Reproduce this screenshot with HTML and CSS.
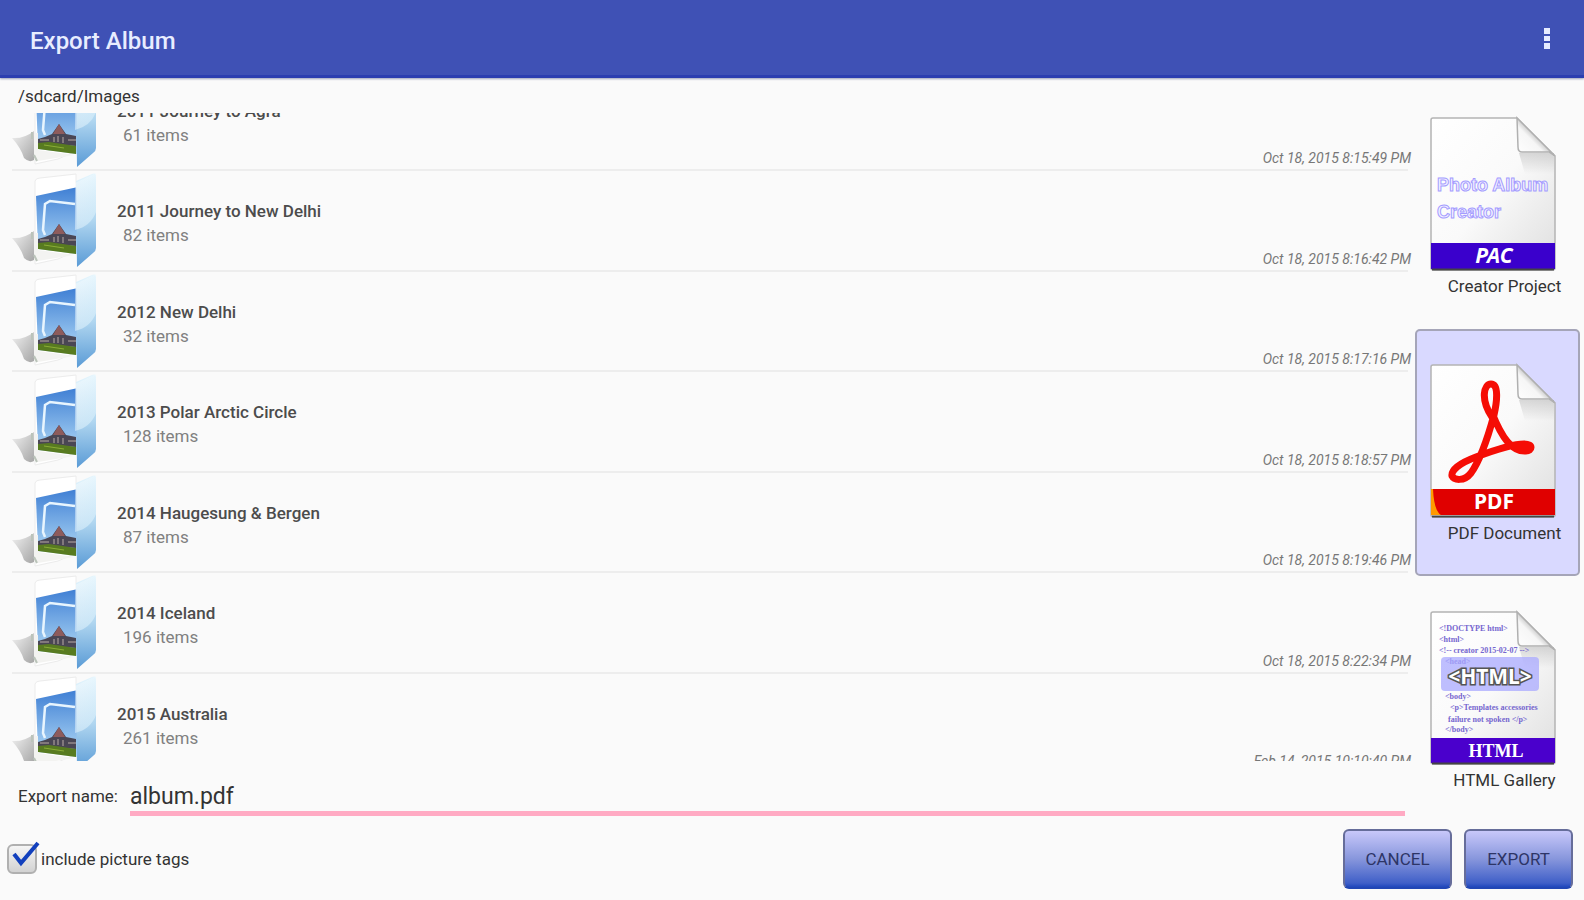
FILE: index.html
```html
<!DOCTYPE html>
<html lang="en">
<head>
<meta charset="utf-8">
<title>Export Album</title>
<link rel="stylesheet" href="styles.css">
</head>
<body>
<svg class="defs" width="0" height="0" aria-hidden="true">
  <defs>
    <linearGradient id="sky" x1="0" y1="0" x2="0" y2="1"><stop offset="0" stop-color="#3f7fd4"/><stop offset="1" stop-color="#b4dcf7"/></linearGradient>
    <linearGradient id="flap" x1="0" y1="0" x2="0" y2="1"><stop offset="0" stop-color="#e4f5fd"/><stop offset=".5" stop-color="#b0d6f0"/><stop offset="1" stop-color="#5a9bd6"/></linearGradient>
    <linearGradient id="gloss" x1="0" y1="0" x2="1" y2="1"><stop offset="0" stop-color="#fff" stop-opacity=".4"/><stop offset="1" stop-color="#d8f0fc" stop-opacity=".6"/></linearGradient>
    <linearGradient id="shade" x1="0" y1="0" x2="1" y2="1"><stop offset="0" stop-color="#f2f2f2"/><stop offset="1" stop-color="#a6a6a6"/></linearGradient>
    <linearGradient id="paper" x1="0" y1="0" x2="1" y2="1"><stop offset="0" stop-color="#fff"/><stop offset=".5" stop-color="#fafafa"/><stop offset="1" stop-color="#dedede"/></linearGradient>
    <linearGradient id="curl" x1="0" y1="1" x2="1" y2="0"><stop offset="0" stop-color="#fff"/><stop offset=".4" stop-color="#f6f6f6"/><stop offset=".5" stop-color="#d0d0d0"/></linearGradient>
    <linearGradient id="dusk" x1="0" y1="0" x2="0" y2="1"><stop offset="0" stop-color="#000" stop-opacity=".14"/><stop offset="1" stop-color="#000" stop-opacity="0"/></linearGradient>
  </defs>
  <symbol id="folder" viewBox="0 0 86 96">
    <path d="M0 65Q12 66 22 58V87Q17 90 12 85Q9 75 0 65Z" fill="url(#shade)"/>
    <path d="M23 8Q24 5 28 5L64 1V78L46 86L23 91Z" fill="#fff" stroke="#ececec"/>
    <path d="M24 23L66 14V81L26 76Z" fill="url(#sky)"/>
    <path d="M26 66L33 64L40 61L47 51L54 61L64 63V73L26 70Z" fill="#4a4654"/>
    <path d="M41 61L47 51L53 61Z" fill="#8d5b5c"/>
    <path d="M28 67H37M42 64V69M46 63V69M51 64V70M56 67H64" stroke="#b9aaa5" stroke-width="1"/>
    <path d="M26 70L37 69L64 73V81L26 76Z" fill="#587b20"/>
    <path d="M32 72L52 75" stroke="#8bad37" stroke-width="1"/>
    <path d="M33 62L31 57L33 31L38 28L63 31" fill="none" stroke="#e8f5fe" stroke-width="2.5"/>
    <path d="M64 8L80 1Q84 -1 84 4V75Q84 78 81 80L65 94Z" fill="url(#flap)"/>
    <path d="M63 10L84 0V39Q79 53 63 57Z" fill="url(#gloss)"/>
    <path d="M22 60V86L26 88L62 82L26 77V60Z" fill="#f3f3f1"/>
    <path d="M20 59V66M22 82L25 88" stroke="#bbc4ba" stroke-width="2"/>
  </symbol>
  <symbol id="page" viewBox="0 0 128 156">
    <path d="M4 2H88L126 40V152Q126 154 123 154H5Q2 154 2 152V4Q2 2 4 2Z" fill="url(#paper)" stroke="#b4b4b4" stroke-width="1.5"/>
    <path d="M90 37H125V58H96Z" fill="url(#dusk)"/>
    <path d="M88 2L126 40L120 36H93Q89 36 89 31Z" fill="url(#curl)" stroke="#b0b0b0" stroke-width="1.5"/>
  </symbol>
</svg>

<header class="bar">
  <h1 class="bar-title">Export Album</h1>
  <button class="more" type="button" aria-label="More options">
    <svg width="8" height="24" viewBox="0 0 8 24"><path d="M1 1h6v6H1zM1 9h6v5H1zM1 16h6v6H1z" fill="#e6ebff"/></svg>
  </button>
</header>

<form class="export">
  <main class="content">
    <section class="browser">
      <p class="path">/sdcard/Images</p>
      <div class="viewport">
        <ul class="albums">
          <li class="album"><svg class="folder"><use href="#folder"/></svg><div class="info"><span class="name">2011 Journey to Agra</span><span class="count">61 items</span></div><time class="date">Oct 18, 2015 8:15:49 PM</time></li>
          <li class="album"><svg class="folder"><use href="#folder"/></svg><div class="info"><span class="name">2011 Journey to New Delhi</span><span class="count">82 items</span></div><time class="date">Oct 18, 2015 8:16:42 PM</time></li>
          <li class="album"><svg class="folder"><use href="#folder"/></svg><div class="info"><span class="name">2012 New Delhi</span><span class="count">32 items</span></div><time class="date">Oct 18, 2015 8:17:16 PM</time></li>
          <li class="album"><svg class="folder"><use href="#folder"/></svg><div class="info"><span class="name">2013 Polar Arctic Circle</span><span class="count">128 items</span></div><time class="date">Oct 18, 2015 8:18:57 PM</time></li>
          <li class="album"><svg class="folder"><use href="#folder"/></svg><div class="info"><span class="name">2014 Haugesung &amp; Bergen</span><span class="count">87 items</span></div><time class="date">Oct 18, 2015 8:19:46 PM</time></li>
          <li class="album"><svg class="folder"><use href="#folder"/></svg><div class="info"><span class="name">2014 Iceland</span><span class="count">196 items</span></div><time class="date">Oct 18, 2015 8:22:34 PM</time></li>
          <li class="album"><svg class="folder"><use href="#folder"/></svg><div class="info"><span class="name">2015 Australia</span><span class="count">261 items</span></div><time class="date">Feb 14, 2015 10:10:40 PM</time></li>
        </ul>
      </div>
      <div class="field">
        <label class="field-label" for="export-name">Export name:</label>
        <input class="field-input" id="export-name" type="text" value="album.pdf">
      </div>
    </section>

    <section class="formats" aria-label="Export format">
      <label class="format">
        <input class="format-radio" type="radio" name="format">
        <svg class="file" viewBox="0 0 128 156">
          <use href="#page"/>
          <g class="art-album"><text x="8" y="75">Photo Album</text><text x="8" y="102">Creator</text></g>
          <rect x="2" y="127" width="124" height="26" fill="#3a00cc"/>
          <path d="M3 153.500H125" stroke="#444" stroke-width="2"/>
          <text class="band band-pac" x="65" y="147">PAC</text>
        </svg>
        <span class="format-name">Creator Project</span>
      </label>
      <label class="format">
        <input class="format-radio" type="radio" name="format" checked>
        <svg class="file" viewBox="0 0 128 156">
          <use href="#page"/>
          <path d="M63 54C51 36 55 21 62 21C70 21 68 39 65 52C59 74 52 96 42 110C35 119 25 117 23 113C22 107 31 100 47 94C63 88 85 81 95 81C105 81 103 88 97 88C83 89 73 75 63 50" fill="none" stroke="#f50d05" stroke-width="7" stroke-linejoin="round" stroke-linecap="round"/>
          <rect x="2" y="126" width="124" height="26" fill="#e00000"/>
          <path d="M2 126V152H12Q5 148 4 126Z" fill="#ff9a00"/>
          <path d="M3 153.500H125" stroke="#444" stroke-width="2"/>
          <text class="band" x="65" y="146">PDF</text>
        </svg>
        <span class="format-name">PDF Document</span>
      </label>
      <label class="format">
        <input class="format-radio" type="radio" name="format">
        <svg class="file" viewBox="0 0 128 156">
          <use href="#page"/>
          <g class="art-code">
            <text x="10" y="21">&lt;!DOCTYPE html&gt;</text>
            <text x="10" y="32">&lt;html&gt;</text>
            <text x="10" y="43">&lt;!-- creator 2015-02-07 --&gt;</text>
            <text x="16" y="54">&lt;head&gt;</text>
            <text x="16" y="89">&lt;body&gt;</text>
            <text x="21" y="100">&lt;p&gt;Templates accessories</text>
            <text x="19" y="112">failure not spoken &lt;/p&gt;</text>
            <text x="16" y="122">&lt;/body&gt;</text>
          </g>
          <rect x="12" y="47" width="98" height="34" rx="4" fill="#aaaaff" fill-opacity=".75"/>
          <text class="art-html" x="61" y="74">&lt;HTML&gt;</text>
          <rect x="2" y="128" width="124" height="25" fill="#4a00cc"/>
          <path d="M3 153.500H125" stroke="#444" stroke-width="2"/>
          <text class="band band-html" x="67" y="147">HTML</text>
        </svg>
        <span class="format-name">HTML Gallery</span>
      </label>
    </section>
  </main>

  <footer class="actions">
    <label class="tags">
      <span class="tick">
        <input class="tick-box" type="checkbox" checked>
        <svg class="tick-mark" width="30" height="28" viewBox="0 0 30 28"><path d="M3 14L10 23L27 3" fill="none" stroke="#1240bd" stroke-width="4"/></svg>
      </span>
      include picture tags
    </label>
    <div class="buttons">
      <button class="btn" type="button">CANCEL</button>
      <button class="btn" type="button">EXPORT</button>
    </div>
  </footer>
</form>
</body>
</html>
```
FILE: styles.css
```css
* { box-sizing: border-box; }

body {
  margin: 0;
  height: 100vh;
  display: flex;
  flex-direction: column;
  background: #fafafa;
  color: #333;
  font: 17px/24px Roboto, "Liberation Sans", sans-serif;
}

.defs { position: absolute; }

.bar {
  flex: none;
  display: flex;
  align-items: center;
  justify-content: space-between;
  height: 78px;
  padding: 2px 32px 0 30px;
  background: #3f51b5;
  border-bottom: 3px solid #2c3eb0;
  box-shadow: 0 1px 2px #9a9fb8;
  color: #e8edff;
}
.bar-title { margin: 0; padding-top: 4px; font-size: 24px; font-weight: 500; line-height: 32px; }
.more { display: flex; padding: 4px 1px; border: 0; background: none; }

.export { flex: 1; min-height: 0; display: flex; flex-direction: column; }
.content { flex: 1; min-height: 0; display: flex; }
.browser { flex: 1; min-width: 0; display: flex; flex-direction: column; padding-bottom: 8px; }
.path { margin: 0; padding: 6px 18px 5px; }

.viewport { flex: 1; min-height: 0; overflow: hidden; padding-left: 12px; }
.albums {
  display: grid;
  grid-auto-rows: 1fr;
  height: calc(100% + 55px);
  margin: -42px 0 0;
  padding: 0;
  list-style: none;
}
.album {
  display: flex;
  margin-right: 7px;
  padding-top: 2px;
  border-bottom: 2px solid #ededed;
}
.folder { flex: none; width: 86px; height: 96px; }
.info { flex: 1; display: flex; flex-direction: column; padding: 26px 0 0 19px; }
.name { color: #4c4c4c; font-weight: 500; }
.count { padding-left: 6px; color: #808080; }
.date { align-self: flex-end; margin-right: -3px; color: #777; font-size: 14px; font-style: italic; line-height: 22px; }

.field { flex: none; display: flex; align-items: flex-end; gap: 12px; padding: 10px 10px 0 18px; }
.field-label { padding-bottom: 8px; }
.field-input {
  flex: 1;
  min-width: 0;
  height: 45px;
  padding: 10px 0 0;
  border: 0;
  border-bottom: 5px solid #ffaac3;
  outline: 0;
  background: none;
  color: #333;
  font: 23px/28px Roboto, "Liberation Sans", sans-serif;
}

.formats { flex: none; width: 169px; padding: 4px 4px 0 0; display: flex; flex-direction: column; }
.format {
  display: flex;
  flex-direction: column;
  height: 247px;
  padding: 32px 0 0 12px;
  border: 2px solid transparent;
  border-radius: 5px;
}
.format:has(:checked) { border-color: #a5a5b8; background: #d9d9ff; }
.format-radio { position: absolute; opacity: 0; pointer-events: none; }
.file { width: 128px; height: 156px; }
.format-name { padding: 2px 0 0 2px; text-align: center; }

.band { fill: #fff; font: bold 21px "Noto Sans", sans-serif; text-anchor: middle; }
.band-pac { font-style: italic; }
.band-html { font-family: "Liberation Serif", serif; font-size: 18px; }
.art-album { fill: #f4f2ff; stroke: #a49cff; stroke-width: 1px; font: bold 18px "Liberation Sans", sans-serif; }
.art-code { fill: #7566cf; font: bold 8px "Liberation Serif", serif; }
.art-html { fill: #fff; stroke: #555; stroke-width: 3px; paint-order: stroke; font: bold 21px "Noto Sans", sans-serif; text-anchor: middle; }

.actions {
  flex: none;
  display: flex;
  align-items: center;
  justify-content: space-between;
  height: 76px;
  padding: 0 11px 6px 7px;
}
.tags { display: flex; align-items: center; gap: 4px; }
.tick { position: relative; display: flex; }
.tick-box {
  appearance: none;
  width: 30px;
  height: 30px;
  margin: 0;
  border: 2px solid #b0b0b0;
  border-radius: 6px;
  background: linear-gradient(#f5f5f5, #d2d2d2);
}
.tick-mark { position: absolute; left: 4px; top: -4px; visibility: hidden; pointer-events: none; }
.tick-box:checked + .tick-mark { visibility: visible; }

.buttons { display: flex; gap: 12px; }
.btn {
  width: 109px;
  height: 60px;
  border: 2px solid #666d9a;
  border-bottom-color: #2146b4;
  border-radius: 6px;
  background: linear-gradient(#c8c8fa, #8796dc 50%, #3f5fc8 93%, #1f47bd);
  color: #2d3566;
  font: 17px/24px Roboto, "Liberation Sans", sans-serif;
}
```
